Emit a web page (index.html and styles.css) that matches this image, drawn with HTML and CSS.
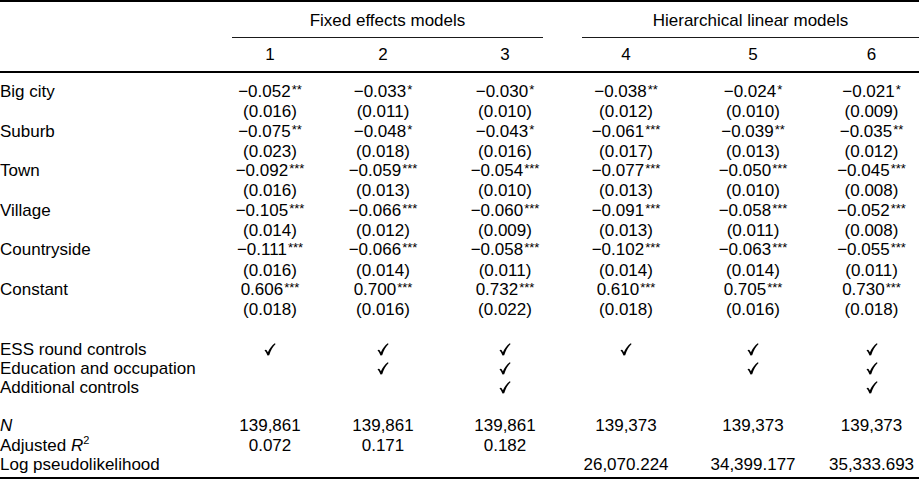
FILE: index.html
```html
<!DOCTYPE html>
<html lang="en">
<head>
<meta charset="utf-8">
<title>Regression results</title>
<link rel="stylesheet" href="styles.css">
</head>
<body>
<table class="results">
  <colgroup>
    <col class="c-label">
    <col class="c1">
    <col class="c2">
    <col class="c3">
    <col class="c4">
    <col class="c5">
    <col class="c6">
  </colgroup>
  <thead>
    <tr class="groups">
      <th></th>
      <th colspan="3"><div class="group group-left">Fixed effects models</div></th>
      <th colspan="3"><div class="group group-right">Hierarchical linear models</div></th>
    </tr>
    <tr class="nums">
      <th></th><th>1</th><th>2</th><th>3</th><th>4</th><th>5</th><th>6</th>
    </tr>
  </thead>
  <tbody class="coefs">
    <tr>
      <td class="label">Big city</td>
      <td>−0.052<span class="sig">**</span><br>(0.016)</td>
      <td>−0.033<span class="sig">*</span><br>(0.011)</td>
      <td>−0.030<span class="sig">*</span><br>(0.010)</td>
      <td>−0.038<span class="sig">**</span><br>(0.012)</td>
      <td>−0.024<span class="sig">*</span><br>(0.010)</td>
      <td>−0.021<span class="sig">*</span><br>(0.009)</td>
    </tr>
    <tr>
      <td class="label">Suburb</td>
      <td>−0.075<span class="sig">**</span><br>(0.023)</td>
      <td>−0.048<span class="sig">*</span><br>(0.018)</td>
      <td>−0.043<span class="sig">*</span><br>(0.016)</td>
      <td>−0.061<span class="sig">***</span><br>(0.017)</td>
      <td>−0.039<span class="sig">**</span><br>(0.013)</td>
      <td>−0.035<span class="sig">**</span><br>(0.012)</td>
    </tr>
    <tr>
      <td class="label">Town</td>
      <td>−0.092<span class="sig">***</span><br>(0.016)</td>
      <td>−0.059<span class="sig">***</span><br>(0.013)</td>
      <td>−0.054<span class="sig">***</span><br>(0.010)</td>
      <td>−0.077<span class="sig">***</span><br>(0.013)</td>
      <td>−0.050<span class="sig">***</span><br>(0.010)</td>
      <td>−0.045<span class="sig">***</span><br>(0.008)</td>
    </tr>
    <tr>
      <td class="label">Village</td>
      <td>−0.105<span class="sig">***</span><br>(0.014)</td>
      <td>−0.066<span class="sig">***</span><br>(0.012)</td>
      <td>−0.060<span class="sig">***</span><br>(0.009)</td>
      <td>−0.091<span class="sig">***</span><br>(0.013)</td>
      <td>−0.058<span class="sig">***</span><br>(0.011)</td>
      <td>−0.052<span class="sig">***</span><br>(0.008)</td>
    </tr>
    <tr>
      <td class="label">Countryside</td>
      <td>−0.111<span class="sig">***</span><br>(0.016)</td>
      <td>−0.066<span class="sig">***</span><br>(0.014)</td>
      <td>−0.058<span class="sig">***</span><br>(0.011)</td>
      <td>−0.102<span class="sig">***</span><br>(0.014)</td>
      <td>−0.063<span class="sig">***</span><br>(0.014)</td>
      <td>−0.055<span class="sig">***</span><br>(0.011)</td>
    </tr>
    <tr>
      <td class="label">Constant</td>
      <td>0.606<span class="sig">***</span><br>(0.018)</td>
      <td>0.700<span class="sig">***</span><br>(0.016)</td>
      <td>0.732<span class="sig">***</span><br>(0.022)</td>
      <td>0.610<span class="sig">***</span><br>(0.018)</td>
      <td>0.705<span class="sig">***</span><br>(0.016)</td>
      <td>0.730<span class="sig">***</span><br>(0.018)</td>
    </tr>
  </tbody>
  <tbody class="controls">
    <tr>
      <td class="label">ESS round controls</td>
      <td><svg class="check" viewBox="0 0 12 13"><path d="M0.5 7.4C1.5 6.5 2.4 6.7 3.1 7.9L3.9 9.3C5.6 5.6 7.8 2.4 10.8 0.3L11.6 1C8.8 3.7 6.8 7.3 5.2 12.2L3.5 12.6C2.8 10.5 1.9 8.6 0.5 7.4Z"/></svg></td>
      <td><svg class="check" viewBox="0 0 12 13"><path d="M0.5 7.4C1.5 6.5 2.4 6.7 3.1 7.9L3.9 9.3C5.6 5.6 7.8 2.4 10.8 0.3L11.6 1C8.8 3.7 6.8 7.3 5.2 12.2L3.5 12.6C2.8 10.5 1.9 8.6 0.5 7.4Z"/></svg></td>
      <td><svg class="check" viewBox="0 0 12 13"><path d="M0.5 7.4C1.5 6.5 2.4 6.7 3.1 7.9L3.9 9.3C5.6 5.6 7.8 2.4 10.8 0.3L11.6 1C8.8 3.7 6.8 7.3 5.2 12.2L3.5 12.6C2.8 10.5 1.9 8.6 0.5 7.4Z"/></svg></td>
      <td><svg class="check" viewBox="0 0 12 13"><path d="M0.5 7.4C1.5 6.5 2.4 6.7 3.1 7.9L3.9 9.3C5.6 5.6 7.8 2.4 10.8 0.3L11.6 1C8.8 3.7 6.8 7.3 5.2 12.2L3.5 12.6C2.8 10.5 1.9 8.6 0.5 7.4Z"/></svg></td>
      <td><svg class="check" viewBox="0 0 12 13"><path d="M0.5 7.4C1.5 6.5 2.4 6.7 3.1 7.9L3.9 9.3C5.6 5.6 7.8 2.4 10.8 0.3L11.6 1C8.8 3.7 6.8 7.3 5.2 12.2L3.5 12.6C2.8 10.5 1.9 8.6 0.5 7.4Z"/></svg></td>
      <td><svg class="check" viewBox="0 0 12 13"><path d="M0.5 7.4C1.5 6.5 2.4 6.7 3.1 7.9L3.9 9.3C5.6 5.6 7.8 2.4 10.8 0.3L11.6 1C8.8 3.7 6.8 7.3 5.2 12.2L3.5 12.6C2.8 10.5 1.9 8.6 0.5 7.4Z"/></svg></td>
    </tr>
    <tr>
      <td class="label">Education and occupation</td>
      <td></td>
      <td><svg class="check" viewBox="0 0 12 13"><path d="M0.5 7.4C1.5 6.5 2.4 6.7 3.1 7.9L3.9 9.3C5.6 5.6 7.8 2.4 10.8 0.3L11.6 1C8.8 3.7 6.8 7.3 5.2 12.2L3.5 12.6C2.8 10.5 1.9 8.6 0.5 7.4Z"/></svg></td>
      <td><svg class="check" viewBox="0 0 12 13"><path d="M0.5 7.4C1.5 6.5 2.4 6.7 3.1 7.9L3.9 9.3C5.6 5.6 7.8 2.4 10.8 0.3L11.6 1C8.8 3.7 6.8 7.3 5.2 12.2L3.5 12.6C2.8 10.5 1.9 8.6 0.5 7.4Z"/></svg></td>
      <td></td>
      <td><svg class="check" viewBox="0 0 12 13"><path d="M0.5 7.4C1.5 6.5 2.4 6.7 3.1 7.9L3.9 9.3C5.6 5.6 7.8 2.4 10.8 0.3L11.6 1C8.8 3.7 6.8 7.3 5.2 12.2L3.5 12.6C2.8 10.5 1.9 8.6 0.5 7.4Z"/></svg></td>
      <td><svg class="check" viewBox="0 0 12 13"><path d="M0.5 7.4C1.5 6.5 2.4 6.7 3.1 7.9L3.9 9.3C5.6 5.6 7.8 2.4 10.8 0.3L11.6 1C8.8 3.7 6.8 7.3 5.2 12.2L3.5 12.6C2.8 10.5 1.9 8.6 0.5 7.4Z"/></svg></td>
    </tr>
    <tr>
      <td class="label">Additional controls</td>
      <td></td>
      <td></td>
      <td><svg class="check" viewBox="0 0 12 13"><path d="M0.5 7.4C1.5 6.5 2.4 6.7 3.1 7.9L3.9 9.3C5.6 5.6 7.8 2.4 10.8 0.3L11.6 1C8.8 3.7 6.8 7.3 5.2 12.2L3.5 12.6C2.8 10.5 1.9 8.6 0.5 7.4Z"/></svg></td>
      <td></td>
      <td></td>
      <td><svg class="check" viewBox="0 0 12 13"><path d="M0.5 7.4C1.5 6.5 2.4 6.7 3.1 7.9L3.9 9.3C5.6 5.6 7.8 2.4 10.8 0.3L11.6 1C8.8 3.7 6.8 7.3 5.2 12.2L3.5 12.6C2.8 10.5 1.9 8.6 0.5 7.4Z"/></svg></td>
    </tr>
  </tbody>
  <tbody class="stats">
    <tr>
      <td class="label"><i>N</i></td>
      <td>139,861</td>
      <td>139,861</td>
      <td>139,861</td>
      <td>139,373</td>
      <td>139,373</td>
      <td>139,373</td>
    </tr>
    <tr>
      <td class="label">Adjusted <i>R</i><sup class="pow">2</sup></td>
      <td>0.072</td>
      <td>0.171</td>
      <td>0.182</td>
      <td></td>
      <td></td>
      <td></td>
    </tr>
    <tr>
      <td class="label">Log pseudolikelihood</td>
      <td></td>
      <td></td>
      <td></td>
      <td>26,070.224</td>
      <td>34,399.177</td>
      <td>35,333.693</td>
    </tr>
  </tbody>
</table>
</body>
</html>
```
FILE: styles.css
```css
html, body {
  margin: 0;
  padding: 0;
  background: #ffffff;
}

body {
  font-family: "Liberation Sans", Arial, Helvetica, sans-serif;
  font-size: 17px;
  color: #000000;
}

.results {
  width: 919px;
  table-layout: fixed;
  border-collapse: separate;
  border-spacing: 0;
  line-height: 19.3px;
}

.c-label { width: 214px; }
.c1 { width: 112px; }
.c2 { width: 114px; }
.c3 { width: 130px; }
.c4 { width: 112px; }
.c5 { width: 142px; }
.c6 { width: 95px; }

.results th,
.results td {
  padding: 0;
  font-weight: normal;
  text-align: center;
  vertical-align: top;
  white-space: nowrap;
}

.results .label {
  text-align: left;
}

/* header */
.groups th {
  border-top: 2px solid #000;
  padding-top: 9px;
  line-height: 19px;
}

.group {
  padding-bottom: 7px;
  border-bottom: 1px solid #1a1a1a;
}

.group-left {
  margin: 0 27px 0 18px;
}

.group-right {
  margin: 0 0 0 12px;
}

.nums th {
  line-height: 19px;
  padding: 7px 0 7px;
  border-bottom: 2px solid #000;
}

/* coefficient block */
.coefs tr:first-child td {
  padding-top: 9px;
}

.sig {
  font-size: 13px;
  position: relative;
  top: -3px;
  margin-left: 1px;
}

/* controls */
.controls tr:first-child td {
  padding-top: 20px;
}

.check {
  width: 12px;
  height: 13px;
  vertical-align: -1px;
  fill: #000;
}

/* statistics */
.stats tr:first-child td {
  padding-top: 19px;
}

.stats tr:last-child td {
  padding-bottom: 3px;
  border-bottom: 2px solid #000;
}

.pow {
  font-size: 11px;
  line-height: 0;
  vertical-align: 7px;
}
```
